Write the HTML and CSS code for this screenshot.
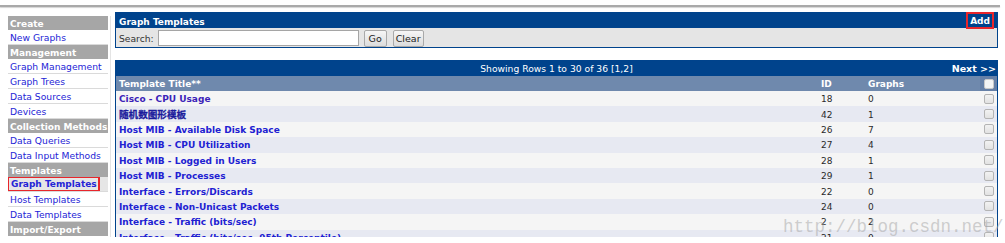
FILE: index.html
```html
<!DOCTYPE html>
<html lang="en">
<head>
    <meta charset="UTF-8">
    <title>Graph Templates</title>
    <link rel="stylesheet" href="styles.css">
</head>
<body>
    <div class="page">
        <div class="topline"></div>
        <div class="layout">
            <nav class="menu">
                <div class="menu-head">Create</div>
                <a class="menu-item" href="#">New Graphs</a>
                <div class="menu-head">Management</div>
                <a class="menu-item" href="#">Graph Management</a>
                <a class="menu-item" href="#">Graph Trees</a>
                <a class="menu-item" href="#">Data Sources</a>
                <a class="menu-item" href="#">Devices</a>
                <div class="menu-head">Collection Methods</div>
                <a class="menu-item" href="#">Data Queries</a>
                <a class="menu-item" href="#">Data Input Methods</a>
                <div class="menu-head">Templates</div>
                <a class="menu-item active" href="#"><span class="mark">Graph Templates</span></a>
                <a class="menu-item" href="#">Host Templates</a>
                <a class="menu-item" href="#">Data Templates</a>
                <div class="menu-head">Import/Export</div>
                <a class="menu-item" href="#">Import Templates</a>
            </nav>

            <main class="content">
                <section class="panel">
                    <div class="panel-title">
                        <span>Graph Templates</span>
                        <a class="add" href="#">Add</a>
                    </div>
                    <form class="search">
                        <label for="filter">Search:</label>
                        <input type="text" id="filter" name="filter">
                        <button type="button" class="btn-go">Go</button>
                        <button type="button" class="btn-clear">Clear</button>
                    </form>
                </section>

                <section class="list">
                    <div class="nav-row">
                        <span></span>
                        <span>Showing Rows 1 to 30 of 36 [<a href="#">1</a>,<a href="#">2</a>]</span>
                        <a class="next" href="#">Next &gt;&gt;</a>
                    </div>
                    <div class="cols">
                        <span>Template Title**</span>
                        <span>ID</span>
                        <span>Graphs</span>
                        <span class="check-cell"><span class="check head"></span></span>
                    </div>
                    <div class="row"><a href="#" class="visited">Cisco - CPU Usage</a><span>18</span><span>0</span><span class="check-cell"><span class="check"></span></span></div>
                    <div class="row"><a href="#" class="cjk">随机数图形模板</a><span>42</span><span>1</span><span class="check-cell"><span class="check"></span></span></div>
                    <div class="row"><a href="#">Host MIB - Available Disk Space</a><span>26</span><span>7</span><span class="check-cell"><span class="check"></span></span></div>
                    <div class="row"><a href="#">Host MIB - CPU Utilization</a><span>27</span><span>4</span><span class="check-cell"><span class="check"></span></span></div>
                    <div class="row"><a href="#">Host MIB - Logged in Users</a><span>28</span><span>1</span><span class="check-cell"><span class="check"></span></span></div>
                    <div class="row"><a href="#">Host MIB - Processes</a><span>29</span><span>1</span><span class="check-cell"><span class="check"></span></span></div>
                    <div class="row"><a href="#">Interface - Errors/Discards</a><span>22</span><span>0</span><span class="check-cell"><span class="check"></span></span></div>
                    <div class="row"><a href="#">Interface - Non-Unicast Packets</a><span>24</span><span>0</span><span class="check-cell"><span class="check"></span></span></div>
                    <div class="row"><a href="#">Interface - Traffic (bits/sec)</a><span>2</span><span>2</span><span class="check-cell"><span class="check"></span></span></div>
                    <div class="row"><a href="#">Interface - Traffic (bits/sec, 95th Percentile)</a><span>21</span><span>0</span><span class="check-cell"><span class="check"></span></span></div>
                    <div class="row"><a href="#">Interface - Traffic (bits/sec, Total Bandwidth)</a><span>23</span><span>0</span><span class="check-cell"><span class="check"></span></span></div>
                </section>
            </main>
        </div>
        <div class="watermark">http://blog.csdn.net/</div>
    </div>
</body>
</html>
```

FILE: styles.css
```css
body {
    margin: 0;
    background-color: #fff;
    font-family: "DejaVu Sans", Verdana, "Noto Sans CJK SC", sans-serif;
    font-size: 9px;
    color: #222;
}

a {
    text-decoration: none;
}

.page {
    position: relative;
    width: 1000px;
}

.topline {
    height: 2px;
    margin-top: 5px;
    background-color: #a9a9a9;
    box-shadow: 0 1px 1px #d4d4d4;
}

.layout {
    display: flex;
    align-items: flex-start;
    height: 230px;
    overflow: hidden;
}

/* left menu */
.menu {
    width: 100px;
    margin: 9px 0 0 8px;
    padding-right: 2px;
    border-right: 1px solid #e4e4e4;
}

.menu-head {
    height: 13px;
    line-height: 14px;
    padding: 1px 0 0 2px;
    background-color: #a6a6a6;
    color: #fff;
    font-weight: bold;
    white-space: nowrap;
    overflow: hidden;
}

.menu-item {
    display: block;
    height: 13px;
    line-height: 14px;
    padding: 1px 0 0 2px;
    border-bottom: 1px solid #dadada;
    color: #2424d6;
    font-size: 9.2px;
    white-space: nowrap;
    overflow: hidden;
}

.menu-item.active {
    height: 14px;
    padding: 0;
    background-color: #e6e6e6;
    font-weight: bold;
    font-size: 9px;
}

.menu-item .mark {
    display: inline-block;
    height: 12px;
    line-height: 13px;
    padding: 0 1px 0 2px;
    border: 1px solid #e8262b;
    outline: 1px solid #e8262b;
}

/* main area */
.content {
    width: 883px;
    margin: 5px 0 0 4px;
}

.panel {
    border: 1px solid #00438c;
}

.panel-title {
    display: flex;
    justify-content: space-between;
    align-items: center;
    height: 15px;
    padding: 0 4px 0 3px;
    background-color: #00438c;
    color: #fff;
    font-weight: bold;
}

.panel-title > span {
    padding-top: 2px;
}

.add {
    height: 13px;
    line-height: 14px;
    padding: 0 2px;
    color: #fff;
    border: 1px solid #e8262b;
    outline: 1px solid #e8262b;
}

.search {
    display: flex;
    align-items: center;
    height: 19px;
    padding-left: 3px;
    background-color: #e5e5e5;
    color: #333;
    font-size: 9.2px;
}

.search label {
    padding-top: 2px;
}

.search input {
    box-sizing: border-box;
    width: 201px;
    height: 16px;
    margin: 1px 5px 0 4px;
    border: 1px solid #a5a5a5;
    background-color: #fff;
}

.search button {
    box-sizing: border-box;
    height: 17px;
    margin-top: 1px;
    padding: 1px 0 0;
    border: 1px solid #a9a9a9;
    border-radius: 2px;
    background: linear-gradient(#f6f6f6, #dcdcdc);
    font-family: "DejaVu Sans", Verdana, sans-serif;
    font-size: 9.5px;
    color: #222;
}

.btn-go {
    width: 23px;
    margin-right: 6px;
}

.btn-clear {
    width: 31px;
}

.list {
    margin-top: 12px;
    border-left: 1px solid #00438c;
    border-right: 1px solid #00438c;
}

.nav-row {
    display: grid;
    grid-template-columns: 1fr auto 1fr;
    align-items: center;
    height: 16px;
    padding-top: 1px;
    box-sizing: border-box;
    background-color: #00438c;
    color: #fff;
    font-size: 9.2px;
}

.nav-row a {
    color: #fff;
}

.nav-row .next {
    justify-self: end;
    padding-right: 1px;
    font-weight: bold;
    font-size: 9.5px;
}

.cols,
.row {
    display: grid;
    grid-template-columns: 1fr 47px 115px 17px;
    align-items: center;
    box-sizing: border-box;
}

.cols {
    height: 15px;
    background-color: #6f89ad;
    color: #fff;
    font-weight: bold;
}

.cols > span,
.row > a,
.row > span {
    padding: 1px 0 0 3px;
}

.row {
    height: 15.4px;
    white-space: nowrap;
}

.row:nth-child(odd) {
    background-color: #f5f5f5;
}

.row:nth-child(even) {
    background-color: #e7e9f2;
}

.row a {
    color: #2121d2;
    font-weight: bold;
}

.row a.visited {
    color: #3b22b8;
}

.row a.cjk {
    font-family: "Noto Sans CJK SC", sans-serif;
    font-size: 9.6px;
    font-weight: 700;
    line-height: 1;
    color: #1c1c9c;
    -webkit-text-stroke: 0.3px #1c1c9c;
}

.row > span {
    color: #2a2a2a;
}

.cols .check-cell,
.row .check-cell {
    display: flex;
    align-items: center;
    justify-content: center;
    padding: 0;
    height: 100%;
}

.cols .check-cell {
    background-color: #6680a7;
}

.check {
    display: block;
    box-sizing: border-box;
    width: 10px;
    height: 10px;
    border: 1px solid #b4b4b4;
    border-radius: 2px;
    background: linear-gradient(#f2f2f2, #e2e2e2);
}

.check.head {
    border-color: #c8c8c8;
    background: #f4f4f4;
}

.watermark {
    position: absolute;
    left: 783px;
    top: 212px;
    font-family: "Liberation Mono", monospace;
    font-size: 17.5px;
    color: rgba(170, 170, 170, 0.55);
    white-space: nowrap;
}
```
